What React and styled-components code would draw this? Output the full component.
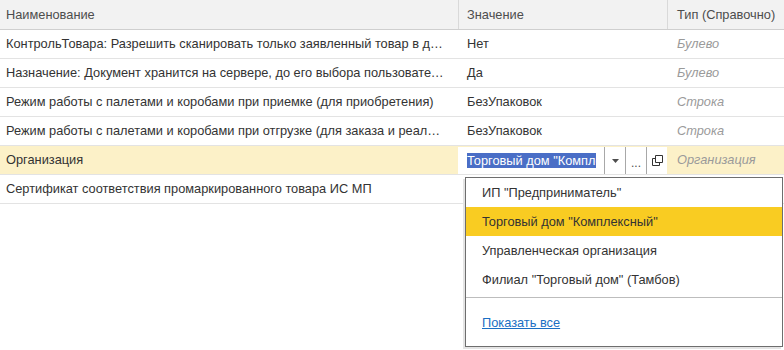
import React from 'react';
import styled, { createGlobalStyle } from 'styled-components';

const GlobalStyle = createGlobalStyle`
  html, body {
    margin: 0;
    padding: 0;
    background: #fff;
  }
  body {
    font-family: 'Liberation Sans', Arial, sans-serif;
    font-size: 12.8px;
    color: #333;
  }
`;

const rows = [
  {
    name: 'КонтрольТовара: Разрешить сканировать только заявленный товар в документе',
    value: 'Нет',
    type: 'Булево',
  },
  {
    name: 'Назначение: Документ хранится на сервере, до его выбора пользователем',
    value: 'Да',
    type: 'Булево',
  },
  {
    name: 'Режим работы с палетами и коробами при приемке (для приобретения)',
    value: 'БезУпаковок',
    type: 'Строка',
  },
  {
    name: 'Режим работы с палетами и коробами при отгрузке (для заказа и реализации)',
    value: 'БезУпаковок',
    type: 'Строка',
  },
  {
    name: 'Организация',
    value: 'Торговый дом "Комплексный"',
    type: 'Организация',
    editing: true,
  },
  {
    name: 'Сертификат соответствия промаркированного товара ИС МП',
    value: '',
    type: '',
  },
];

const options = [
  'ИП "Предприниматель"',
  'Торговый дом "Комплексный"',
  'Управленческая организация',
  'Филиал "Торговый дом" (Тамбов)',
];

export default function App() {
  return (
    <>
      <GlobalStyle />
      <Page>
        <Table>
          <HeaderRow>
            <HeadCell $pad={6}>Наименование</HeadCell>
            <HeadCell $pad={9} $divider>Значение</HeadCell>
            <HeadCell $pad={10} $divider>Тип (Справочно)</HeadCell>
          </HeaderRow>
          {rows.map((row, i) => (
            <Row key={i} $active={row.editing}>
              <Cell $pad={6}>{row.name}</Cell>
              {row.editing ? (
                <EditField>
                  <EditText>
                    <Selected>{row.value}</Selected>
                  </EditText>
                  <EditButton>
                    <svg width="7" height="4" viewBox="0 0 7 4">
                      <path d="M0 0h7L3.5 4z" fill="#4d4d4d" />
                    </svg>
                  </EditButton>
                  <EditButton>
                    <Dots>...</Dots>
                  </EditButton>
                  <EditButton>
                    <svg width="11" height="11" viewBox="0 0 11 11">
                      <path
                        d="M3.5 0.5h7v7h-7z M0.5 3.5h3 M0.5 3.5v7h7v-3"
                        fill="none"
                        stroke="#333"
                        strokeWidth="1"
                      />
                    </svg>
                  </EditButton>
                </EditField>
              ) : (
                <Cell $pad={9}>{row.value}</Cell>
              )}
              <TypeCell $pad={10}>{row.type}</TypeCell>
            </Row>
          ))}
        </Table>
        <Dropdown>
          {options.map((opt, i) => (
            <Option key={opt} $selected={i === 1}>
              {opt}
            </Option>
          ))}
          <Separator />
          <Footer>
            <ShowAll href="#">Показать все</ShowAll>
          </Footer>
        </Dropdown>
      </Page>
    </>
  );
}

const Page = styled.div`
  position: relative;
  width: 784px;
  height: 350px;
  overflow: hidden;
`;

const Table = styled.div`
  display: flex;
  flex-direction: column;
`;

const HeaderRow = styled.div`
  display: grid;
  grid-template-columns: 458px 209px 1fr;
  height: 30px;
  box-sizing: border-box;
  background: #f2f2f2;
  border-bottom: 1px solid #cfcfcf;
  color: #4d4d4d;
`;

const HeadCell = styled.div`
  display: flex;
  align-items: center;
  padding-left: ${(p) => p.$pad - (p.$divider ? 1 : 0)}px;
  border-left: ${(p) => (p.$divider ? '1px solid #d9d9d9' : 'none')};
  white-space: nowrap;
  overflow: hidden;
`;

const Row = styled.div`
  display: grid;
  grid-template-columns: 458px 209px 1fr;
  height: 29px;
  box-sizing: border-box;
  border-bottom: 1px solid #e3e3e3;
  background: ${(p) => (p.$active ? '#fcf1c8' : '#fff')};
`;

const Cell = styled.div`
  display: block;
  line-height: 28px;
  padding: 0 13px 0 ${(p) => p.$pad}px;
  min-width: 0;
  white-space: nowrap;
  overflow: hidden;
  text-overflow: ellipsis;
`;

const TypeCell = styled(Cell)`
  color: #9a9a9a;
  font-style: italic;
`;

const EditField = styled.div`
  display: flex;
  align-items: stretch;
  background: #fff;
  margin: 1px 0 0;
`;

const EditText = styled.div`
  flex: 1;
  min-width: 0;
  display: flex;
  align-items: center;
  margin: 0 8px 0 9px;
  overflow: hidden;
  white-space: nowrap;
`;

const Selected = styled.span`
  background: #4a6ec6;
  color: #fff;
  line-height: 15px;
`;

const EditButton = styled.div`
  width: 21px;
  flex: none;
  display: flex;
  align-items: center;
  justify-content: center;
  border-left: 1px solid #a8a8a8;
  box-sizing: border-box;
`;

const Dots = styled.span`
  color: #4d4d4d;
  font-size: 12px;
  line-height: 1;
  margin-top: 4px;
`;

const Dropdown = styled.div`
  position: absolute;
  left: 465px;
  top: 177px;
  width: 318px;
  box-sizing: border-box;
  background: #fff;
  border: 1px solid #6e6e6e;
  box-shadow: -2px 2px 0 #e4e4e4;
  display: flex;
  flex-direction: column;
`;

const Option = styled.div`
  height: 29px;
  display: flex;
  align-items: center;
  padding-left: 16px;
  background: ${(p) => (p.$selected ? '#f9cc22' : 'transparent')};
  color: #333;
`;

const Separator = styled.div`
  margin-top: 3px;
  height: 1px;
  background: #bdbdbd;
`;

const Footer = styled.div`
  height: 48px;
  display: flex;
  align-items: center;
  padding-left: 16px;
`;

const ShowAll = styled.a`
  color: #1a6fc4;
  text-decoration: underline;
`;
